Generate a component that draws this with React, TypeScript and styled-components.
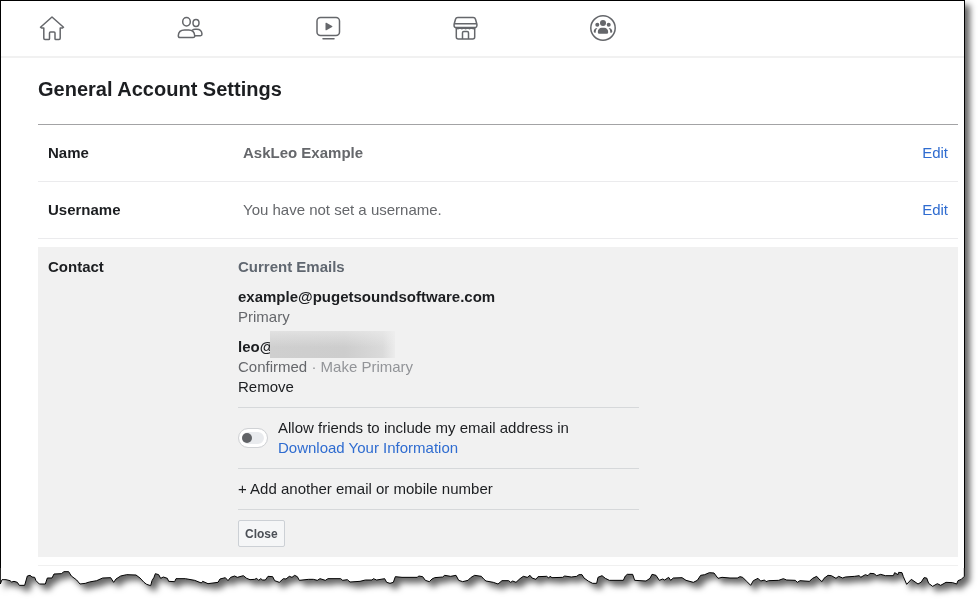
import React from "react";
import styled, { createGlobalStyle } from "styled-components";

const GlobalStyle = createGlobalStyle`
  body {
    margin: 0;
    background: #fff;
    color: #1c1e21;
    font: 15px/20px "Liberation Sans", Arial, sans-serif;
  }
`;

const Sheet = styled.div`
  margin-right: 15px;
  padding-bottom: 16px;
  filter: drop-shadow(5px 5px 3px rgba(0, 0, 0, 0.6));
`;

const Page = styled.div`
  border: 1px solid #000;
  border-bottom: 0;
  background: #fff;
`;

const TopNav = styled.nav`
  display: flex;
  gap: 110px;
  padding: 13px 37px 14px;
  border-bottom: 2px solid #f1f1f1;
`;

const NavLink = styled.a`
  display: block;
  width: 28px;
  height: 28px;
  color: #65676b;

  svg {
    display: block;
    fill: none;
    stroke: currentColor;
    stroke-width: 1.5;
    stroke-linecap: round;
    stroke-linejoin: round;
  }

  svg .solid {
    fill: currentColor;
    stroke: none;
  }
`;

const Main = styled.main`
  padding: 19px 6px 2px 37px;
`;

const Title = styled.h1`
  margin: 0;
  padding-bottom: 23px;
  border-bottom: 1px solid #a3a3a5;
  font-size: 20px;
  line-height: 24px;
`;

const SettingRow = styled.section`
  display: grid;
  grid-template-columns: 195px 1fr auto;
  padding: 18px 10px;
  border-bottom: 1px solid #ebebed;
`;

const Label = styled.h2`
  margin: 0;
  font-size: 15px;
  line-height: 20px;
`;

const Value = styled.span<{ $strong?: boolean }>`
  color: #65676b;
  font-weight: ${(p) => (p.$strong ? 700 : 400)};
`;

const Link = styled.a`
  color: #2f6cd0;
  text-decoration: none;
`;

const ContactSlot = styled.div`
  padding: 8px 0;
  border-bottom: 1px solid #f0f0f0;
`;

const ContactPanel = styled.section`
  display: grid;
  grid-template-columns: 190px minmax(0, 401px);
  padding: 10px;
  background: #f1f1f1;
`;

const GroupTitle = styled.h3`
  margin: 0;
  color: #606770;
  font-size: 15px;
  line-height: 20px;
`;

const EmailEntry = styled.div`
  margin-top: 10px;
`;

const Email = styled.strong`
  display: block;
  position: relative;
`;

const Redaction = styled.span`
  position: absolute;
  left: 32px;
  top: -6px;
  width: 125px;
  height: 27px;
  background: linear-gradient(to bottom, rgba(240, 240, 240, 0.55), transparent 60%),
    linear-gradient(to right, #cfcfcf, #cdcdcd 60%, #dadada 90%, #ececec);
`;

const Muted = styled.span<{ $faint?: boolean }>`
  color: ${(p) => (p.$faint ? "#929498" : "#65676b")};
`;

const TextButton = styled.button<{ $faint?: boolean }>`
  padding: 0;
  border: 0;
  background: none;
  color: ${(p) => (p.$faint ? "#929498" : "#1c1e21")};
  font: inherit;
  cursor: pointer;
`;

const Block = styled.div`
  display: flex;
  align-items: center;
  gap: 10px;
  margin-top: 10px;
  padding-top: 10px;
  border-top: 1px solid #d6d8da;
`;

const Toggle = styled.input`
  appearance: none;
  display: flex;
  align-items: center;
  flex: none;
  box-sizing: border-box;
  width: 30px;
  height: 20px;
  margin: 0;
  padding: 3px;
  border: 1px solid #d0d2d5;
  border-radius: 10px;
  background: #e9ebee content-box;
  box-shadow: inset 0 0 0 3px #fff;

  &::before {
    content: "";
    width: 10px;
    height: 10px;
    border-radius: 5px;
    background: #606266;
  }

  &:checked::before {
    margin-left: auto;
    background: #2f6cd0;
  }
`;

const ToggleText = styled.div`
  flex: 1;

  a {
    display: table;
  }
`;

const CloseButton = styled.button`
  height: 27px;
  padding: 0 6px;
  border: 1px solid #ccd0d5;
  border-radius: 2px;
  background: #f5f6f7;
  color: #4b4f56;
  font: 700 12px/24px "Liberation Sans", Arial, sans-serif;
  cursor: pointer;
`;

const TornEdge = styled.svg`
  display: block;
  width: 100%;
  height: 20px;
  overflow: visible;
`;

const edgeRuns: { start: number; points: string }[] = [
  {
    start: 0,
    points:
      "1,84 1,132 6,119 18,119 30,122 35,126 42,124 52,127 58,136 74,136 82,108 90,106 96,111 104,112 108,122 118,132 136,132 142,114 156,114 162,102 184,101 192,95 206,95 214,108 230,120 240,132 256,130 268,126 290,122 308,114 332,113 341,127 348,117 362,108 380,104 408,105 420,114 432,127 440,133 452,137 456,122 462,112 466,101 476,104 482,115 490,111 502,115 506,124 524,125 528,116 556,116 584,121 604,129 608,124 624,131 654,127 660,117 676,113 684,122 692,112 704,108 712,112",
  },
  {
    start: 720,
    points:
      "10,107 20,115 30,119 44,118 50,115 56,121 62,116 68,120 76,120 84,109 98,110 104,122 118,127 130,116 138,117 148,109 156,112 164,106 172,110 178,121 206,118 220,118 232,121 240,116 256,121 264,116 302,116 308,121 322,119 330,126 360,124 376,120 396,120 400,116 410,120 434,116 440,127 450,130 460,127 466,110 486,112 532,112 536,108 548,110 556,121 568,125 576,117 584,113 608,111 614,106 632,109 648,106 656,121 668,125 684,121 692,113 704,106 724,109 732,118",
  },
  {
    start: 1440,
    points:
      "18,123 40,127 54,132 66,122 86,122 92,127 98,123 108,127 120,116 130,109 142,112 150,106 156,114 168,118 174,110 200,109 206,114 210,109 216,113 248,112 254,108 274,111 290,109 297,104 306,104 312,114 326,124 338,130 350,130 354,112 366,107 376,115 388,121 430,121 436,108 442,103 458,103 464,121 498,123 510,115 516,103 528,106 538,121 548,117 554,120 566,112 572,121 580,114 606,113 618,121 640,127 652,121 662,106 674,104 688,98 702,99 714,115 726,112",
  },
  {
    start: 2190,
    points:
      "0,114 22,114 30,110 38,112 50,124 62,136 70,122 84,115 92,123 104,120 108,125 116,122 146,121 160,116 170,120 196,121 202,127 210,122 238,124 248,115 260,109 270,120 276,125 282,115 294,106 304,107 318,115 326,109 338,114 346,111 374,109 388,107 392,112 406,104 414,107 420,100 432,101 440,107 452,103 466,107 490,107 494,98 504,104 506,97 516,98 520,110 530,133 544,118 564,132 574,126 582,113 590,114 596,130 608,139 622,131 632,136 648,127 668,128 680,132 684,122 694,118 703,109 703,84",
  },
];

const edgePoints = edgeRuns
  .flatMap(({ start, points }) =>
    points.split(" ").map((pair) => {
      const [x, y] = pair.split(",").map(Number);
      return `${x + start},${y}`;
    })
  )
  .join(" ");

const navItems = [
  {
    label: "Home",
    icon: <path d="M2.5 13.2 14 3l11.500 10.200-1 .8h-2.300v10.300q0 1.200-1.200 1.200h-3.200q-.8 0-.8-.8v-5.700q0-1-1-1h-3.500q-1 0-1 1v5.700q0 .8-.8.8H7q-1.200 0-1.200-1.200V14H3.500z" />,
  },
  {
    label: "Friends",
    icon: (
      <>
        <ellipse cx="10.500" cy="7.800" rx="3.800" ry="4.200" />
        <ellipse cx="20" cy="9" rx="3" ry="3.500" />
        <path d="M4 23.500h13c1.300 0 1.800-.7 1.700-1.800-.3-3.700-2.600-5.700-6-5.700H8.500c-3.500 0-6 2-6.200 5.700 0 1.100.5 1.800 1.700 1.800z" />
        <path d="M16.500 16c.8-.6 1.600-.8 2.500-.8h1.800c3.200 0 5 1.800 5.200 4.900 0 1-.4 1.600-1.500 1.600h-5.800" />
      </>
    ),
  },
  {
    label: "Watch",
    icon: (
      <>
        <rect x="3" y="3.500" width="22.500" height="18" rx="3.500" />
        <path d="M9 24.700h11" />
        <path className="solid" d="M11.500 9.300v6.400q0 1 .9.500l5.700-3.200q.8-.5 0-1l-5.700-3.200q-.9-.5-.9.500z" />
      </>
    ),
  },
  {
    label: "Marketplace",
    icon: (
      <>
        <path d="M5.800 3.500h15.400q1.800 0 2.300 1.700l1.400 5v1.600q0 1.700-1.700 1.700H3.800q-1.700 0-1.700-1.700v-1.600l1.400-5q.5-1.700 2.300-1.700zM2.500 9.700h22" />
        <path d="M4.300 14v9q0 2 2 2h14.400q2 0 2-2v-9M10.500 25v-6.200q0-1.300 1.300-1.300h3.400q1.300 0 1.300 1.300V25" />
        <path d="M4 13.800q2 1.800 4 0 1.900 1.800 3.800 0 1.900 1.800 3.800 0 1.900 1.800 3.800 0 1.800 1.800 3.600 0" />
      </>
    ),
  },
  {
    label: "Groups",
    icon: (
      <>
        <circle cx="13" cy="14" r="12.200" />
        <g className="solid">
          <circle cx="13" cy="9" r="3" />
          <circle cx="7.300" cy="10.700" r="2" />
          <circle cx="18.700" cy="10.700" r="2" />
          <path d="M9.300 19.700h7.400q1.500 0 1.500-1.500c0-3-1.800-4.500-4-4.500h-2.400c-2.200 0-4 1.500-4 4.500q0 1.500 1.500 1.500z" />
          <path d="M7.400 14c-2.300 0-3.700 1.600-3.700 3.600q0 1.100 1 1.100h1c0-1.800.5-3.500 1.700-4.700zM18.600 14c2.300 0 3.700 1.600 3.700 3.600q0 1.100-1 1.100h-1c0-1.800-.5-3.500-1.700-4.700z" />
        </g>
      </>
    ),
  },
];

export default function App() {
  return (
    <>
      <GlobalStyle />
      <Sheet>
        <Page>
          <TopNav>
            {navItems.map(({ label, icon }) => (
              <NavLink key={label} href="#" aria-label={label}>
                <svg width="28" height="28" viewBox="0 0 28 28" aria-hidden="true">
                  {icon}
                </svg>
              </NavLink>
            ))}
          </TopNav>
          <Main>
            <Title>General Account Settings</Title>
            <SettingRow>
              <Label>Name</Label>
              <Value $strong>AskLeo Example</Value>
              <Link href="#">Edit</Link>
            </SettingRow>
            <SettingRow>
              <Label>Username</Label>
              <Value>You have not set a username.</Value>
              <Link href="#">Edit</Link>
            </SettingRow>
            <ContactSlot>
              <ContactPanel>
                <Label>Contact</Label>
                <div>
                  <GroupTitle>Current Emails</GroupTitle>
                  <EmailEntry>
                    <Email>example@pugetsoundsoftware.com</Email>
                    <Muted>Primary</Muted>
                  </EmailEntry>
                  <EmailEntry>
                    <Email>
                      leo@
                      <Redaction />
                    </Email>
                    <div>
                      <Muted>Confirmed</Muted> <Muted $faint>·</Muted>{" "}
                      <TextButton $faint>Make Primary</TextButton>
                    </div>
                    <TextButton>Remove</TextButton>
                  </EmailEntry>
                  <Block>
                    <Toggle type="checkbox" role="switch" id="allow-friends" />
                    <ToggleText>
                      <label htmlFor="allow-friends">
                        Allow friends to include my email address in
                      </label>
                      <Link href="#">Download Your Information</Link>
                    </ToggleText>
                  </Block>
                  <Block>
                    <TextButton>+ Add another email or mobile number</TextButton>
                  </Block>
                  <Block>
                    <CloseButton>Close</CloseButton>
                  </Block>
                </div>
              </ContactPanel>
            </ContactSlot>
          </Main>
        </Page>
        <TornEdge viewBox="0 84 2895 60" preserveAspectRatio="none" aria-hidden="true">
          <polyline
            points={edgePoints}
            fill="#fff"
            stroke="#000"
            strokeWidth="1"
            vectorEffect="non-scaling-stroke"
          />
        </TornEdge>
      </Sheet>
    </>
  );
}
